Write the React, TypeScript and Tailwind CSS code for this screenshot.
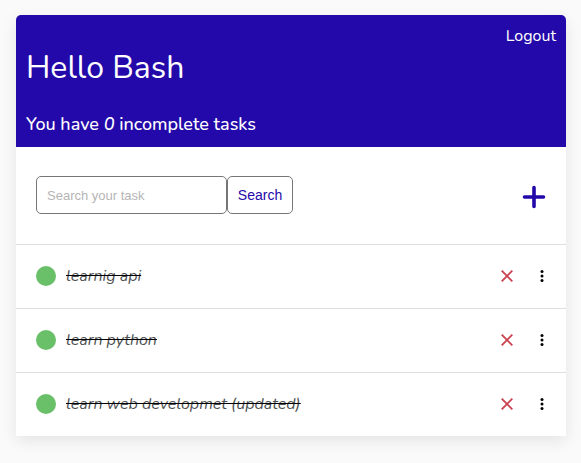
type Task = { id: number; title: string };

const tasks: Task[] = [
  { id: 1, title: "learnig api" },
  { id: 2, title: "learn python" },
  { id: 3, title: "learn web developmet (updated)" },
];

function TaskRow({ task }: { task: Task }) {
  return (
    <li className="flex h-16 items-center border-t border-[#dedede] px-5 pb-0.5">
      <span className="mr-2.5 size-5 shrink-0 rounded-full bg-[#69c069]" />
      <s className="grow text-base leading-6 text-[#4d5051] italic decoration-black">
        {task.title}
      </s>
      <button type="button" aria-label={`Delete ${task.title}`} className="mr-6">
        <svg viewBox="0 0 14 14" className="size-3.5" fill="none" stroke="#cb4450" strokeWidth="1.9">
          <path d="M1.7 1.7 12.3 12.3M12.3 1.7 1.7 12.3" />
        </svg>
      </button>
      <button type="button" aria-label={`Options for ${task.title}`}>
        <svg viewBox="0 0 8 14" className="h-3.5 w-2" fill="#000">
          <circle cx="4" cy="2.6" r="1.5" />
          <circle cx="4" cy="7" r="1.5" />
          <circle cx="4" cy="11.4" r="1.5" />
        </svg>
      </button>
    </li>
  );
}

export default function App() {
  return (
    <div className="min-h-screen bg-[#fafafa] pt-[15px] pr-[15px] pb-[15px] pl-4 font-['Nunito','Lato',sans-serif]">
      <main className="mx-auto max-w-[550px] rounded-t-[5px] bg-white shadow-[0_5px_16px_rgba(0,0,0,0.09)]">
        <header className="flex items-start justify-between rounded-t-[5px] bg-[#2309a9] px-2.5 pt-[9px] pb-[11px] text-white">
          <div>
            <h1 className="mt-5 text-[32px] leading-12">Hello Bash</h1>
            <h2 className="mt-5 text-lg leading-6 font-medium">
              You have <i>0</i> incomplete tasks
            </h2>
          </div>
          <a href="#logout" className="text-base leading-6">
            Logout
          </a>
        </header>
        <div className="flex items-center justify-between px-5 pt-[29px] pb-[30px]">
          <form className="flex font-['Liberation_Sans',Arial,sans-serif]">
            <input
              type="search"
              aria-label="Search your task"
              placeholder="Search your task"
              className="h-[38px] w-[191px] rounded-[5px] border border-[#767676] px-2.5 text-[13px] placeholder:text-[#b5b5b5]"
            />
            <button
              type="submit"
              className="h-[38px] w-[66px] rounded-[5px] border border-[#767676] text-sm text-[#2309a9]"
            >
              Search
            </button>
          </form>
          <button type="button" aria-label="Add task" className="mt-1">
            <svg viewBox="0 0 24 24" className="size-6" fill="none" stroke="#2309a9" strokeWidth="3.6" strokeLinecap="round">
              <path d="M12 2.5V21.5M2.5 12H21.5" />
            </svg>
          </button>
        </div>
        <ul>
          {tasks.map((task) => (
            <TaskRow key={task.id} task={task} />
          ))}
        </ul>
      </main>
    </div>
  );
}
